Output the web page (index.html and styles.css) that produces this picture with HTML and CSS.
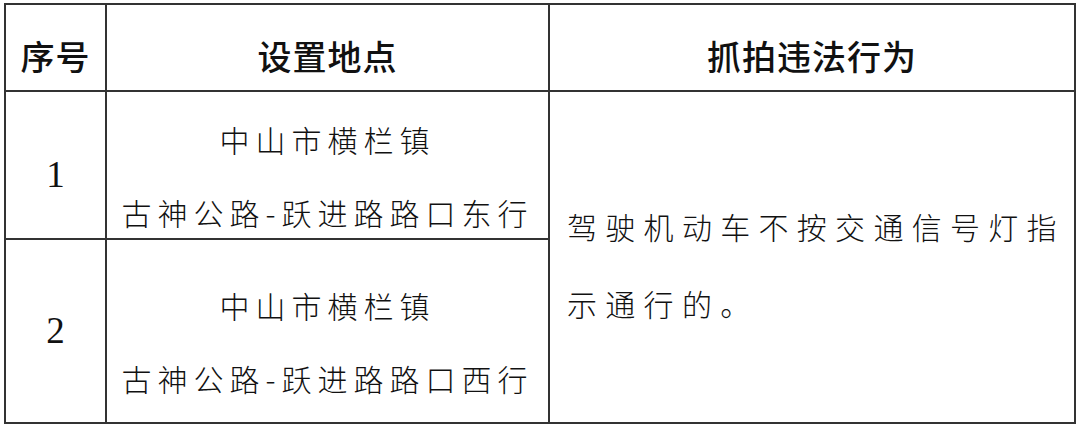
FILE: index.html
```html
<!DOCTYPE html>
<html lang="zh-CN">
<head>
<meta charset="utf-8">
<title>抓拍违法行为设置地点</title>
<link rel="stylesheet" href="styles.css">
</head>
<body>
<table class="sheet">
  <colgroup>
    <col class="c-no">
    <col class="c-place">
    <col class="c-act">
  </colgroup>
  <thead>
    <tr class="row-head">
      <th class="head">序号</th>
      <th class="head">设置地点</th>
      <th class="head">抓拍违法行为</th>
    </tr>
  </thead>
  <tbody>
    <tr class="row-1">
      <td class="cell no no-1">1</td>
      <td class="cell place">
        <div class="lines">
          <span>中山市横栏镇</span>
          <span>古神公路-跃进路路口东行</span>
        </div>
      </td>
      <td class="cell act" rowspan="2">驾驶机动车不按交通信号灯指示通行的。</td>
    </tr>
    <tr class="row-2">
      <td class="cell no">2</td>
      <td class="cell place">
        <div class="lines">
          <span>中山市横栏镇</span>
          <span>古神公路-跃进路路口西行</span>
        </div>
      </td>
    </tr>
  </tbody>
</table>
</body>
</html>
```
FILE: styles.css
```css
html, body {
  margin: 0;
  padding: 0;
  background: #ffffff;
}

body {
  font-family: "Noto Sans CJK SC", "Noto Sans", sans-serif;
  color: #111111;
}

.sheet {
  margin: 3px 0 0 4px;
  width: 1072px;
  border-collapse: collapse;
  table-layout: fixed;
}

.c-no { width: 101px; }
.c-place { width: 443px; }
.c-act { width: 526px; }

.head,
.cell {
  border: 2px solid #333333;
  padding: 0;
  vertical-align: middle;
  text-align: center;
}

.row-head { height: 87px; }
.row-1 { height: 148px; }
.row-2 { height: 184px; }

.head {
  font-size: 34px;
  font-weight: 500;
  letter-spacing: 1px;
  line-height: 40px;
  padding-top: 17px;
}

.no {
  font-family: "Liberation Serif", serif;
  font-size: 37px;
  line-height: 42px;
}

.no-1 {
  padding-top: 20px;
}

.place {
  font-size: 30px;
  font-weight: 300;
  letter-spacing: 6px;
  line-height: 40px;
  padding-top: 20px;
  white-space: nowrap;
}

.lines {
  display: flex;
  flex-direction: column;
  align-items: center;
  gap: 33px;
}

.act {
  font-size: 30px;
  font-weight: 300;
  letter-spacing: 8.3px;
  line-height: 77px;
  text-align: left;
  padding: 15px 4px 0 17px;
}
```
